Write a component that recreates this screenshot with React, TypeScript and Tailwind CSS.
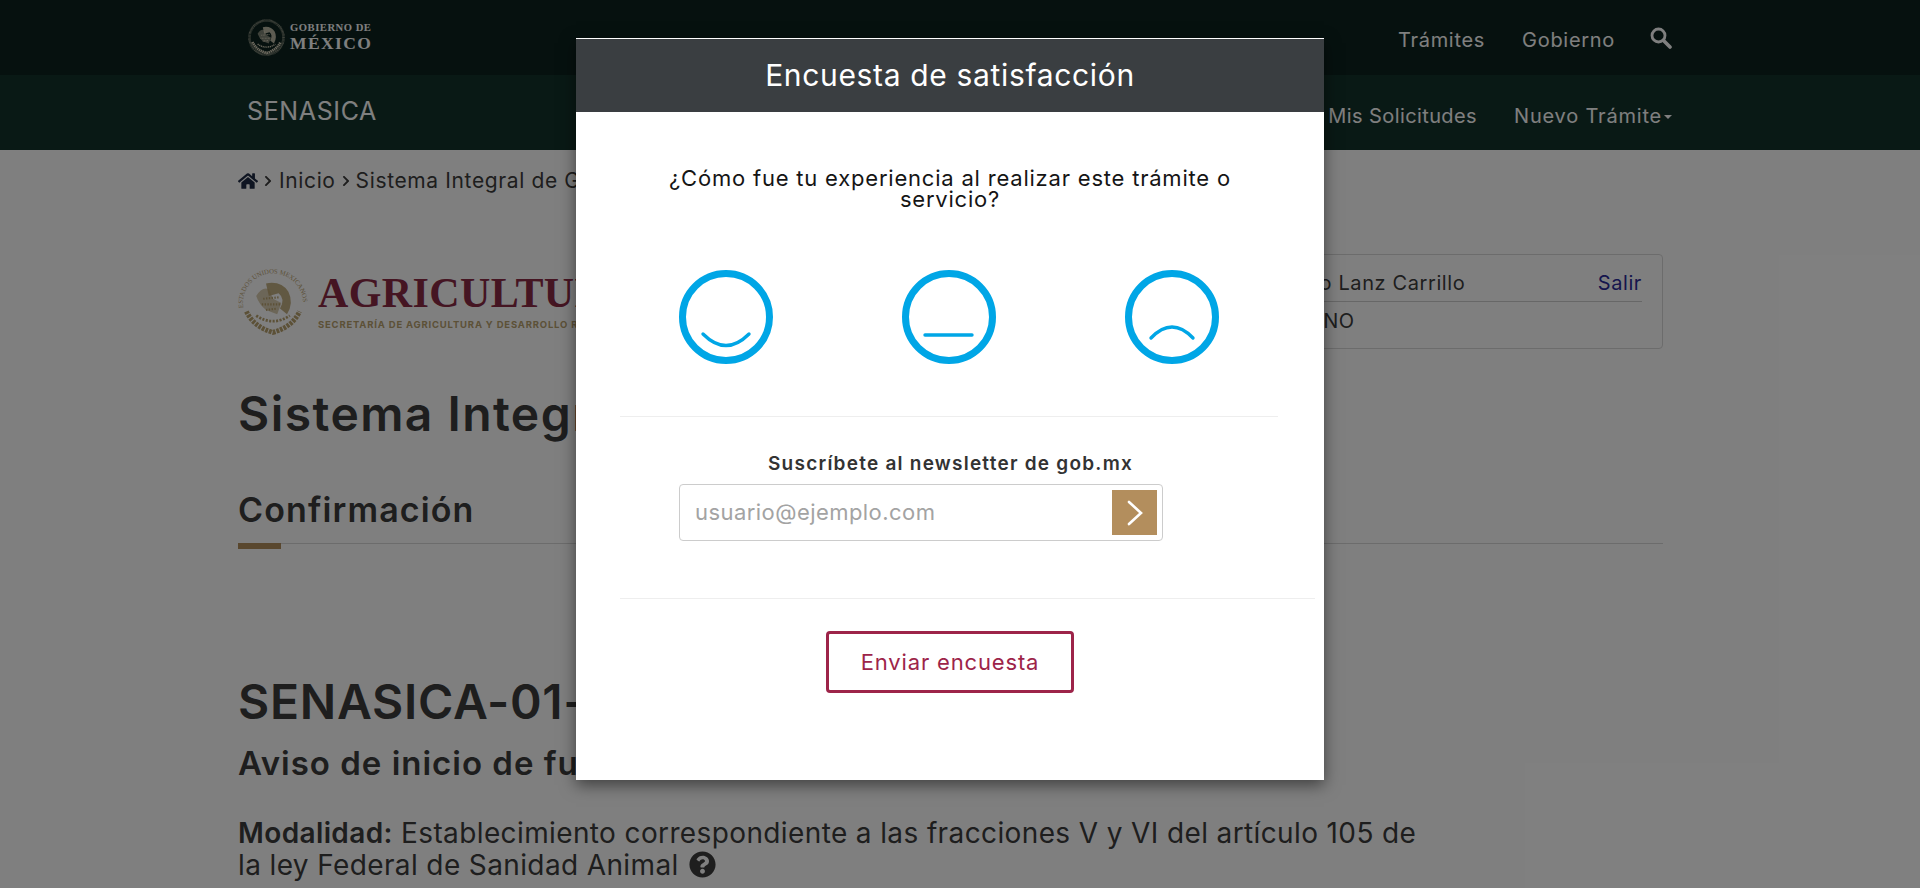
import React from "react";
import { FaHome, FaQuestionCircle, FaChevronRight } from "react-icons/fa";

const font = { fontFamily: "Inter, 'Open Sans', sans-serif" };

function Seal({ size, color, ring, id }: { size: number; color: string; ring?: boolean; id: string }) {
  return (
    <svg width={size} height={size} viewBox="0 0 100 100" className="shrink-0">
      <defs>
        <path id={id} d="M 8 60 A 43 43 0 1 1 92 60" />
      </defs>
      {ring ? (
        <text fontSize="9.5" fill={color} fontFamily="'Liberation Serif', serif">
          <textPath href={`#${id}`} startOffset="2%">ESTADOS UNIDOS MEXICANOS</textPath>
        </text>
      ) : (
        <circle cx="50" cy="50" r="46" fill="none" stroke={color} strokeWidth="7" strokeDasharray="1.5 1.5" opacity="0.75" />
      )}
      <path d="M40 22 Q62 18 72 34 Q80 50 70 66 L60 58 Q68 44 58 36 L44 40 Z" fill={color} opacity="0.85" />
      <path d="M26 40 Q34 26 44 30 L50 44 L62 50 L56 66 L40 60 Q30 52 26 40 Z" fill={color} opacity="0.55" />
      <path d="M36 44 L58 42 M34 52 L60 52 M40 60 L56 58" stroke={color} strokeWidth="3" strokeDasharray="2 2" />
      <path d="M12 62 Q22 84 50 92 Q78 84 88 62" fill="none" stroke={color} strokeWidth="7" strokeDasharray="4 1.5" />
      <path d="M26 68 Q50 84 74 68" fill="none" stroke={color} strokeWidth="4" strokeDasharray="3 2" />
    </svg>
  );
}

function Face({ mouth }: { mouth: string }) {
  return (
    <svg width="96" height="96" viewBox="0 0 96 96">
      <circle cx="48" cy="48" r="43.5" fill="none" stroke="#00a6e6" strokeWidth="7" />
      <path d={mouth} fill="none" stroke="#00a6e6" strokeWidth="3.4" strokeLinecap="round" />
    </svg>
  );
}

export default function App() {
  return (
    <div style={font} className="relative h-[888px] w-full overflow-hidden bg-white text-[#3d3d3d]">
      <header className="flex h-[75px] items-center justify-between bg-[#0c231e] pl-[248px] pr-[248px] text-white">
        <div className="flex items-center gap-[5px]">
          <Seal size={37} color="#d9d2bc" id="sealA" />
          <div className="leading-none" style={{ fontFamily: "'Liberation Serif', serif" }}>
            <div className="text-[10.6px] font-bold tracking-[0.05em]">GOBIERNO DE</div>
            <div className="mt-[1px] text-[17.5px] font-bold tracking-[0.08em]">MÉXICO</div>
          </div>
        </div>
        <nav className="mt-[4px] flex items-center text-[20px] tracking-[0.035em]">
          <span>Trámites</span>
          <span className="ml-[37px]">Gobierno</span>
          <svg width="22" height="22" viewBox="0 0 22 22" className="ml-[35px] mb-[3px]">
            <circle cx="8.5" cy="8.5" r="6.5" fill="none" stroke="white" strokeWidth="2.8" />
            <path d="M13.5 13.5 L20 20" stroke="white" strokeWidth="3.6" strokeLinecap="round" />
          </svg>
        </nav>
      </header>
      <div className="flex h-[75px] items-center justify-between bg-[#13322b] pl-[247px] pr-[248px] text-white">
        <span className="mb-[2px] text-[25px] tracking-[0.025em]">SENASICA</span>
        <nav className="mt-[7px] flex items-center text-[20px]">
          <span className="tracking-[0.02em]">Mis Solicitudes</span>
          <span className="ml-[37px] tracking-[0.04em]">Nuevo Trámite</span>
          <span className="ml-[2px] mt-[2px] border-x-[4px] border-t-[4px] border-x-transparent border-t-white" />
        </nav>
      </div>

      <main className="pl-[238px] pr-[257px]">
        <div className="flex h-[60px] items-center pt-[2px] text-[21px] tracking-[0.03em]">
          <FaHome className="mr-[4px] h-[20px] w-[20px] text-[#1f2a44]" />
          <FaChevronRight className="mr-[5px] h-[12px] w-[12px]" />
          <span>Inicio</span>
          <FaChevronRight className="mx-[4px] h-[12px] w-[12px]" />
          <span>Sistema Integral de Gestión</span>
        </div>

        <div className="mt-[44px] flex items-start justify-between">
          <div className="mt-[14px] flex items-center gap-[10px]">
            <Seal size={70} color="#b9a26f" ring id="sealB" />
            <div>
              <div className="text-[42px] font-bold leading-[40px] tracking-[0.01em] text-[#8a2a45]" style={{ fontFamily: "'Liberation Serif', serif" }}>AGRICULTURA</div>
              <div className="mt-[5px] text-[9.5px] font-bold tracking-[0.085em] text-[#b9a26f]">SECRETARÍA DE AGRICULTURA Y DESARROLLO RURAL</div>
            </div>
          </div>
          <div className="h-[95px] w-[460px] rounded border border-[#d8d8d8] px-5 text-[20px] tracking-[0.03em]">
            <div className="flex h-[47px] items-center justify-between border-b border-[#cfcfcf] pt-[10px]">
              <span className="pl-[32px]">Ricardo Lanz Carrillo</span>
              <span className="text-[#2b2b9a]">Salir</span>
            </div>
            <div className="flex h-[38px] items-center pl-[5px]">CIUDADANO</div>
          </div>
        </div>

        <h1 className="mt-[35px] text-[48px] font-semibold leading-[60px] tracking-[0.03em]">Sistema Integral</h1>
        <div className="mt-[46px] border-b border-[#d8d8d8]">
          <h2 className="text-[34px] font-semibold leading-[40px] tracking-[0.033em]">Confirmación</h2>
          <div className="mb-[-6px] mt-[13px] h-[6px] w-[43px] bg-[#b38e5d]" />
        </div>

        <h1 className="mt-[128px] text-[48px] font-semibold leading-[60px] tracking-[0.015em]">SENASICA-01-</h1>
        <h3 className="mt-[11px] text-[33px] font-semibold leading-[40px] tracking-[0.03em]">Aviso de inicio de funcionamiento</h3>
        <p className="mt-[34px] w-[1200px] text-[28px] leading-[32px] tracking-[0.0135em]">
          <b className="font-semibold">Modalidad:</b> Establecimiento correspondiente a las fracciones V y VI del artículo 105 de
          <br />
          la ley Federal de Sanidad Animal{" "}
          <FaQuestionCircle className="ml-[2px] inline h-[27px] w-[27px] align-[-3px]" />
        </p>
      </main>

      <div className="absolute inset-0 bg-black/50">
        <div className="ml-[576px] mt-[38px] h-[742px] w-[748px] border-t border-white bg-white shadow-[0_5px_15px_rgba(0,0,0,0.5)]">
          <div className="flex h-[73px] items-center justify-center bg-[#3a3e41] text-[30px] tracking-[0.022em] text-white">Encuesta de satisfacción</div>
          <div className="px-[44px]">
            <p className="mx-auto mt-[56px] w-[580px] text-center text-[22px] leading-[21px] tracking-[0.036em] text-[#151515]">¿Cómo fue tu experiencia al realizar este trámite o servicio?</p>
            <div className="mt-[59px] flex w-[660px] gap-[127px] pl-[58px]">
              <Face mouth="M25 65 Q48 88 71 65" />
              <Face mouth="M24 66 H71" />
              <Face mouth="M27 69 Q48 47 69 69" />
            </div>
            <div className="mt-[51px] w-[658px] border-t border-[#eeeeee]" />
            <div className="ml-[59px] mt-[36px] w-[484px]">
              <div className="ml-[89px] text-[19px] font-semibold leading-[22px] tracking-[0.065em] text-[#333]">Suscríbete al newsletter de gob.mx</div>
              <div className="mt-[9px] flex h-[57px] items-center justify-between rounded border border-[#cccccc] pl-[15px] pr-[5px]">
                <span className="text-[22px] tracking-[0.02em] text-[#a3a3a3]">usuario@ejemplo.com</span>
                <span className="flex h-[45px] w-[45px] items-center justify-center bg-[#b38e5d]">
                  <svg width="18" height="28" viewBox="0 0 18 28">
                    <path d="M3 3 L15 14 L3 25" fill="none" stroke="white" strokeWidth="2.6" strokeLinecap="round" />
                  </svg>
                </span>
              </div>
            </div>
            <div className="mt-[57px] w-[695px] border-t border-[#eeeeee]" />
          </div>
          <div className="mt-[32px] flex justify-center">
            <button className="h-[62px] w-[248px] rounded border-[3px] border-[#9d2449] text-[22px] tracking-[0.038em] text-[#9d2449]">Enviar encuesta</button>
          </div>
        </div>
      </div>
    </div>
  );
}
